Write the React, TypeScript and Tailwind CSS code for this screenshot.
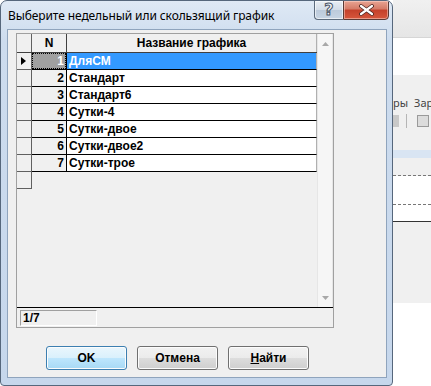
import React from "react";

const rows: [number, string][] = [
  [1, "ДляСМ"],
  [2, "Стандарт"],
  [3, "Стандарт6"],
  [4, "Сутки-4"],
  [5, "Сутки-двое"],
  [6, "Сутки-двое2"],
  [7, "Сутки-трое"],
];

function WinButton({ children, primary }: { children: React.ReactNode; primary?: boolean }) {
  return (
    <div
      className={
        "w-[81px] h-[24px] rounded-[3px] border flex items-center justify-center text-[12px] font-bold text-black shadow-[inset_0_0_0_1px_#fcfcfc] " +
        (primary
          ? "border-[#3c7fb1] bg-[linear-gradient(#eaf6fd,#d9f0fc_50%,#bee6fd_50%,#a7d9f5)]"
          : "border-[#707070] bg-[linear-gradient(#f2f2f2,#ebebeb_50%,#dddddd_50%,#cfcfcf)]")
      }
    >
      {children}
    </div>
  );
}

export default function App() {
  return (
    <div className="w-[431px] h-[386px] flex overflow-hidden bg-white font-['Liberation_Sans',Arial,sans-serif]">
      {/* Dialog */}
      <div className="w-[393px] h-[386px] shrink-0 flex flex-col border border-[#56677c] rounded-t-[7px] rounded-b-[4px] bg-[linear-gradient(#dfe9f5,#cddcee_40px,#c6d7ec)] overflow-hidden">
        {/* Title bar */}
        <div className="h-[28px] shrink-0 flex items-start">
          <div className="pl-[7px] pt-[7px] text-[12px] leading-[16px] text-black flex-1 font-['Noto_Sans',sans-serif] tracking-[-0.1px]">
            Выберите недельный или скользящий график
          </div>
          <div className="flex -mt-[1px] mr-[3px]">
            <div className="w-[29px] h-[20px] border border-[#5c6b7d] border-r-0 rounded-bl-[4px] bg-[linear-gradient(#e9eef4,#d3dce7_50%,#bccadb_50%,#c8d5e4)] flex items-center justify-center shadow-[inset_0_0_0_1px_rgba(255,255,255,0.6)]">
              <span className="text-[16px] leading-none font-bold text-[#f4f6f9] [-webkit-text-stroke:1px_#4b5666] font-['DejaVu_Sans',sans-serif]">?</span>
            </div>
            <div className="w-[46px] h-[20px] border border-[#5a3a35] rounded-br-[4px] bg-[linear-gradient(#e8a493,#d47a66_45%,#c4402a_50%,#d6573c)] flex items-center justify-center shadow-[inset_0_0_0_1px_rgba(255,220,210,0.5)]">
              <svg width="15" height="12" viewBox="0 0 15 12">
                <path d="M2 2 L13 10 M13 2 L2 10" stroke="#4a2520" strokeWidth="3.8" strokeLinecap="round" />
                <path d="M2 2 L13 10 M13 2 L2 10" stroke="#ffffff" strokeWidth="2.2" strokeLinecap="round" />
              </svg>
            </div>
          </div>
        </div>

        {/* Body */}
        <div className="flex-1 flex flex-col pl-[6px] pr-[5px] pb-[7px]">
          <div className="flex-1 border border-[#8fa4bd] bg-[#f0f0f0] flex flex-col pl-[8px] pt-[3px]">
            {/* Grid */}
            <div className="w-[318px] h-[295px] border border-[#a0a0a0] flex flex-col">
              <div className="h-[273px] flex">
                {/* table */}
                <div className="w-[300px] flex flex-col bg-[#f0f0f0]">
                  {/* header */}
                  <div className="h-[19px] flex border-b border-[#404040] text-[12px] font-bold text-black">
                    <div className="w-[15px] border-r border-[#606060] bg-[#f0f0f0]" />
                    <div className="w-[35px] border-r border-[#404040] flex items-center justify-center bg-[#f0f0f0]">N</div>
                    <div className="w-[250px] border-r border-[#b0b0b0] flex items-center justify-center bg-[#f0f0f0]">Название графика</div>
                  </div>
                  {rows.map(([n, name], i) => {
                    const sel = i === 0;
                    return (
                      <div key={n} className="h-[17px] flex text-[12px] font-bold">
                        <div className="w-[15px] border-r border-b border-[#606060] bg-[#f0f0f0] flex items-center pl-[4px]">
                          {sel && (
                            <svg width="5" height="8" viewBox="0 0 5 8">
                              <path d="M0 0 L5 4 L0 8 Z" fill="#000" />
                            </svg>
                          )}
                        </div>
                        <div
                          className={
                            "w-[35px] border-r border-b border-black flex items-center justify-end " +
                            (sel ? "bg-[#a0a0a0] text-white" : "bg-[#f0f0f0] text-black")
                          }
                        >
                          {sel ? (
                            <div className="w-full h-full border border-dotted border-black flex items-center justify-end pr-[1px]">{n}</div>
                          ) : (
                            <span className="pr-[2px]">{n}</span>
                          )}
                        </div>
                        <div
                          className={
                            "w-[250px] border-r border-b border-r-[#b0b0b0] border-b-black flex items-center pl-[2px] " +
                            (sel ? "bg-[#3399ff] text-white" : "bg-white text-black")
                          }
                        >
                          {name}
                        </div>
                      </div>
                    );
                  })}
                  <div className="h-[17px] flex">
                    <div className="w-[15px] border-r border-b border-[#606060] bg-[#f0f0f0]" />
                  </div>
                </div>
                {/* scrollbar */}
                <div className="w-[16px] bg-[#f6f6f6] border-l border-r border-[#e6e6e6] flex flex-col items-center justify-between pt-[8px] pb-[7px]">
                  <svg width="7" height="4" viewBox="0 0 7 4">
                    <path d="M0 4 L3.5 0 L7 4 Z" fill="#a8a8a8" />
                  </svg>
                  <svg width="7" height="4" viewBox="0 0 7 4">
                    <path d="M0 0 L3.5 4 L7 0 Z" fill="#a8a8a8" />
                  </svg>
                </div>
              </div>
              {/* status */}
              <div className="flex-1 border-t border-black pl-[3px] pt-[2px] bg-[#f0f0f0]">
                <div className="w-[77px] h-[16px] border border-t-[#a0a0a0] border-l-[#a0a0a0] border-r-white border-b-white flex items-center pl-[2px] text-[12px] font-bold text-black">
                  1/7
                </div>
              </div>
            </div>

            {/* Buttons */}
            <div className="flex gap-[10px] ml-[30px] mt-[18px]">
              <WinButton primary>OK</WinButton>
              <WinButton>Отмена</WinButton>
              <WinButton>
                <span>
                  <span className="underline">Н</span>айти
                </span>
              </WinButton>
            </div>
          </div>
        </div>
      </div>

      {/* Background application */}
      <div className="flex-1 flex flex-col overflow-hidden">
        <div className="h-[38px] bg-[linear-gradient(#f0f0f0,#e6e6e6)] border-b border-[#d6d6d6]" />
        <div className="h-[37px] bg-white" />
        <div className="h-[55px] bg-[#f0f0f0] flex flex-col">
          <div className="mt-[21px] h-[14px] text-[11px] leading-[14px] text-[#444] whitespace-nowrap font-['Noto_Sans',sans-serif] flex gap-[6px]">
            <span>ры</span>
            <span>Зар</span>
          </div>
          <div className="mt-[4px] flex items-center gap-[2px] h-[14px]">
            <div className="w-[6px] h-[12px] bg-[#c8c8c8]" />
            <div className="w-[1px] h-[14px] bg-[#b5b5b5] ml-[5px]" />
            <div className="w-[12px] h-[12px] ml-[8px] border border-[#9a9a9a] bg-[#dcdcdc]" />
          </div>
        </div>
        <div className="h-[20px] bg-[#f0f0f0]" />
        <div className="h-[8px] bg-[#d9e5f3]" />
        <div className="h-[18px] bg-[#f0f0f0] border-b border-dashed border-[#777]" />
        <div className="h-[29px] bg-white border-b border-dashed border-[#777]" />
        <div className="h-[17px] bg-white border-b border-[#333]" />
        <div className="h-[81px] bg-[#f0f0f0]" />
        <div className="flex-1 bg-white" />
      </div>
    </div>
  );
}
